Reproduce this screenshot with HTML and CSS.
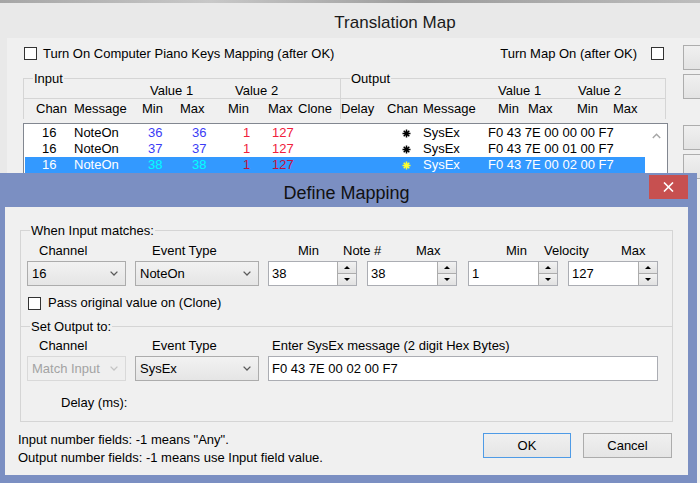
FILE: index.html
```html
<!DOCTYPE html>
<html>
<head>
<meta charset="utf-8">
<title>Translation Map</title>
<link rel="stylesheet" href="styles.css">
</head>
<body>
<div class="desk"></div>
<div class="win">
  <div class="win-title">Translation Map</div>
  <div class="win-client">
    <div class="main">
      <div class="toprow">
        <label class="chk"><span class="box"></span><span class="chk-text">Turn On Computer Piano Keys Mapping (after OK)</span></label>
        <label class="chk chk-r"><span class="chk-text">Turn Map On (after OK)</span><span class="box"></span></label>
      </div>
      <div class="groups">
        <div class="grp grp-in">
          <span class="legend">Input</span>
          <div class="vrow vrow-in"><span>Value 1</span><span>Value 2</span></div>
          <div class="crow crow-in"><span>Chan</span><span>Message</span><span>Min</span><span>Max</span><span>Min</span><span>Max</span><span>Clone</span></div>
        </div>
        <div class="grp grp-out">
          <span class="legend">Output</span>
          <div class="vrow vrow-out"><span>Value 1</span><span>Value 2</span></div>
          <div class="crow crow-out"><span>Delay</span><span>Chan</span><span>Message</span><span>Min</span><span>Max</span><span>Min</span><span>Max</span></div>
        </div>
      </div>
      <div class="list">
        <div class="rows">
          <div class="row"><span>16</span><span>NoteOn</span><span class="v1">36</span><span class="v1">36</span><span class="v2">1</span><span class="v2">127</span><span class="star"><svg width="9" height="9" viewBox="0 0 9 9"><path d="M4.5 0.5V8.5M0.5 4.5H8.5M1.7 1.7L7.3 7.3M7.3 1.7L1.7 7.3" stroke="currentColor" stroke-width="1.5"/></svg></span><span>SysEx</span><span>F0 43 7E 00 00 00 F7</span></div>
          <div class="row"><span>16</span><span>NoteOn</span><span class="v1">37</span><span class="v1">37</span><span class="v2">1</span><span class="v2">127</span><span class="star"><svg width="9" height="9" viewBox="0 0 9 9"><path d="M4.5 0.5V8.5M0.5 4.5H8.5M1.7 1.7L7.3 7.3M7.3 1.7L1.7 7.3" stroke="currentColor" stroke-width="1.5"/></svg></span><span>SysEx</span><span>F0 43 7E 00 01 00 F7</span></div>
          <div class="row row-sel"><span>16</span><span>NoteOn</span><span class="v1">38</span><span class="v1">38</span><span class="v2">1</span><span class="v2">127</span><span class="star"><svg width="9" height="9" viewBox="0 0 9 9"><path d="M4.5 0.5V8.5M0.5 4.5H8.5M1.7 1.7L7.3 7.3M7.3 1.7L1.7 7.3" stroke="currentColor" stroke-width="1.5"/></svg></span><span>SysEx</span><span>F0 43 7E 00 02 00 F7</span></div>
        </div>
        <div class="vscroll"><svg width="9" height="6" viewBox="0 0 9 6"><path d="M0.8 5L4.5 1.3L8.2 5" fill="none" stroke="#a6a6a6" stroke-width="1.4"/></svg></div>
      </div>
    </div>
    <div class="side">
      <div class="sbtn"></div>
      <div class="sbtn"></div>
      <div class="sbtn sbtn-gap"></div>
      <div class="sbtn"></div>
    </div>
  </div>
</div>

<div class="dlg">
  <div class="dlg-title">Define Mapping
    <div class="dlg-close"><svg width="11" height="10" viewBox="0 0 11 10"><path d="M1 0.5L10 9.5M10 0.5L1 9.5" stroke="#fff" stroke-width="1.6"/></svg></div>
  </div>
  <div class="dlg-client">
    <div class="dgrp">
      <div class="sec sec-1">
        <span class="legend">When Input matches:</span>
        <div class="lbls">
          <span class="lb-ch">Channel</span>
          <span class="lb-ev">Event Type</span>
          <div class="trio trio-note"><span>Min</span><span>Note #</span><span>Max</span></div>
          <div class="trio trio-vel"><span>Min</span><span>Velocity</span><span>Max</span></div>
        </div>
        <div class="ctls">
          <div class="combo combo-ch"><span>16</span><svg width="8" height="5" viewBox="0 0 8 5"><path d="M0.6 0.6L4 4L7.4 0.6" fill="none" stroke="#5a5a5a" stroke-width="1.3"/></svg></div>
          <div class="combo combo-ev"><span>NoteOn</span><svg width="8" height="5" viewBox="0 0 8 5"><path d="M0.6 0.6L4 4L7.4 0.6" fill="none" stroke="#5a5a5a" stroke-width="1.3"/></svg></div>
          <div class="spin spin-a"><span class="spin-val">38</span><div class="spin-btns"><div class="sb"><span class="tri-up"></span></div><div class="sb"><span class="tri-dn"></span></div></div></div>
          <div class="spin spin-b"><span class="spin-val">38</span><div class="spin-btns"><div class="sb"><span class="tri-up"></span></div><div class="sb"><span class="tri-dn"></span></div></div></div>
          <div class="spin spin-c"><span class="spin-val">1</span><div class="spin-btns"><div class="sb"><span class="tri-up"></span></div><div class="sb"><span class="tri-dn"></span></div></div></div>
          <div class="spin spin-b"><span class="spin-val">127</span><div class="spin-btns"><div class="sb"><span class="tri-up"></span></div><div class="sb"><span class="tri-dn"></span></div></div></div>
        </div>
        <label class="chk chk-clone"><span class="box"></span><span class="chk-text">Pass original value on (Clone)</span></label>
      </div>
      <div class="sec sec-2">
        <span class="legend">Set Output to:</span>
        <div class="lbls">
          <span class="lb-ch">Channel</span>
          <span class="lb-ev">Event Type</span>
          <span class="lb-sx">Enter SysEx message (2 digit Hex Bytes)</span>
        </div>
        <div class="ctls">
          <div class="combo combo-ch combo-dis"><span>Match Input</span><svg width="8" height="5" viewBox="0 0 8 5"><path d="M0.6 0.6L4 4L7.4 0.6" fill="none" stroke="#c4c4c4" stroke-width="1.3"/></svg></div>
          <div class="combo combo-ev"><span>SysEx</span><svg width="8" height="5" viewBox="0 0 8 5"><path d="M0.6 0.6L4 4L7.4 0.6" fill="none" stroke="#5a5a5a" stroke-width="1.3"/></svg></div>
          <div class="textin">F0 43 7E 00 02 00 F7</div>
        </div>
        <div class="delay">Delay (ms):</div>
      </div>
    </div>
    <div class="footer">
      <div class="notes">
        <div>Input number fields: -1 means "Any".</div>
        <div>Output number fields: -1 means use Input field value.</div>
      </div>
      <div class="btns">
        <div class="btn btn-ok">OK</div>
        <div class="btn">Cancel</div>
      </div>
    </div>
  </div>
</div>
</body>
</html>
```

FILE: styles.css
```css
* { box-sizing: border-box; }
html, body { margin: 0; padding: 0; }
body {
  width: 700px;
  height: 483px;
  overflow: hidden;
  position: relative;
  background: #e9e9e9;
  font-family: "Liberation Sans", Arial, sans-serif;
  font-size: 13px;
  color: #000;
}

/* desktop strip behind the window */
.desk { height: 3px; background: linear-gradient(90deg, #a6a6a6, #c8c8c8 30%, #9c9c9c 60%, #bdbdbd); }

/* ---------- background window (continues past the right edge) ---------- */
.win { width: 700px; overflow: hidden; background: #e9e9e9; }
.win-title {
  height: 35px;
  padding-top: 2px;
  padding-left: 90px;
  line-height: 35px;
  text-align: center;
  font-size: 17px;
  color: #1a1a1a;
}
.win-client {
  margin-left: 7px;
  background: #f0f0f0;
  height: 445px;
  display: flex;
}
.main { width: 661px; flex: none; padding-left: 16px; }

.toprow {
  height: 24px;
  padding-top: 7px;
  padding-right: 4px;
  display: flex;
  justify-content: space-between;
  align-items: center;
  line-height: 16px;
}
.chk { display: flex; align-items: center; }
.box {
  width: 13px;
  height: 13px;
  border: 1px solid #333;
  background: #fff;
  display: inline-block;
  flex: none;
}
.toprow .chk > .box:first-child { margin-left: 1px; margin-right: 6px; }
.chk-r .box { margin-left: 14px; }

.groups { display: flex; width: 643px; margin-top: 16px; }
.grp {
  position: relative;
  border-top: 1px solid #d5d5d5;
  border-left: 1px solid #d5d5d5;
}
.grp-in { width: 317px; }
.grp-out { flex: 1; border-right: 1px solid #d5d5d5; }
.legend {
  position: absolute;
  top: -8px;
  left: 9px;
  line-height: 15px;
  padding: 0 1px;
  background: #f0f0f0;
}
.vrow {
  height: 20px;
  padding-top: 5px;
  line-height: 14px;
  border-bottom: 1px solid #d5d5d5;
  display: grid;
}
.vrow-in { padding-left: 126px; grid-template-columns: 85px auto; }
.vrow-out { padding-left: 157px; grid-template-columns: 80px auto; }
.crow { height: 20px; line-height: 20px; display: grid; white-space: nowrap; }
.crow-in { padding-left: 12px; grid-template-columns: 38px 68px 38px 48px 40px 30px auto; }
.crow-out { grid-template-columns: 46px 36px 75px 30px 49px 36px auto; }

.list {
  margin-top: 4px;
  width: 645px;
  height: 62px;
  border: 1px solid #828790;
  background: #fff;
  display: flex;
}
.rows { flex: 1; padding: 1px 0 0 1px; }
.row {
  height: 16px;
  line-height: 16px;
  padding-left: 17px;
  display: grid;
  grid-template-columns: 32px 74px 44px 51px 29px 130px 21px 65px auto;
  white-space: nowrap;
}
.row .v1 { color: #3c3cf5; }
.row .v2 { color: #f0203c; }
.star { display: flex; align-items: center; color: #000; }
.row-sel { background: #3399ff; color: #fff; }
.row-sel .v1 { color: #00ffff; }
.row-sel .v2 { color: #c4123e; }
.row-sel .star { color: #ffff30; }
.vscroll { width: 22px; padding-top: 9px; display: flex; justify-content: center; align-items: flex-start; }

.side { margin-left: 15px; padding-top: 7px; flex: 1; }
.sbtn {
  width: 100%;
  height: 25px;
  border: 1px solid #adadad;
  border-right: 0;
  background: linear-gradient(#f0f0f0, #e3e3e3);
}
.sbtn + .sbtn { margin-top: 4px; }
.sbtn.sbtn-gap { margin-top: 26px; }

/* ---------- Define Mapping dialog (window over the other one) ---------- */
.dlg {
  position: absolute;
  left: 0;
  top: 173px;
  width: 697px;
  height: 310px;
  background: #7b8fc2;
  padding: 0 9px 8px 5px;
  display: flex;
  flex-direction: column;
}
.dlg-title {
  position: relative;
  height: 34px;
  padding-top: 3px;
  line-height: 34px;
  text-align: center;
  font-size: 18px;
  color: #111;
}
.dlg-close {
  position: absolute;
  top: 2px;
  right: 0;
  width: 39px;
  height: 24px;
  background: #c75050;
  display: flex;
  align-items: center;
  justify-content: center;
}
.dlg-client { flex: 1; background: #f0f0f0; }

.dgrp {
  margin: 23px 15px 0;
  border: 1px solid #d5d5d5;
}
.sec { position: relative; padding-left: 6px; }
.sec-1 { padding-top: 13px; padding-bottom: 16px; }
.sec-2 { border-top: 1px solid #d5d5d5; padding-top: 12px; padding-bottom: 11px; }

.lbls { display: flex; height: 14px; line-height: 14px; white-space: nowrap; }
.lb-ch { width: 99px; padding-left: 12px; }
.lb-ev { width: 124px; margin-left: 9px; padding-left: 17px; }
.lb-sx { margin-left: 9px; padding-left: 4px; }
.trio { display: grid; }
.trio-note { width: 189px; margin-left: 9px; padding-left: 30px; grid-template-columns: 45px 73px auto; }
.trio-vel { width: 190px; margin-left: 11px; padding-left: 38px; grid-template-columns: 38px 77px auto; }

.ctls { display: flex; margin-top: 3px; height: 25px; }
.combo {
  height: 25px;
  border: 1px solid #acacac;
  background: linear-gradient(#f2f2f2, #e5e5e5);
  display: flex;
  align-items: center;
  justify-content: space-between;
  padding: 0 7px 0 4px;
}
.combo-ch { width: 99px; }
.combo-ev { width: 124px; margin-left: 9px; }
.combo-dis { border-color: #d9d9d9; background: #efefef; color: #a3a3a3; }

.spin {
  height: 25px;
  border: 1px solid #abadb3;
  background: #fff;
  display: flex;
}
.spin-a { width: 89px; margin-left: 9px; }
.spin-b { width: 90px; margin-left: 10px; }
.spin-c { width: 90px; margin-left: 11px; }
.spin-val { flex: 1; padding-left: 3px; line-height: 23px; }
.spin-btns {
  width: 19px;
  display: flex;
  flex-direction: column;
  border-left: 1px solid #acacac;
}
.sb {
  flex: 1;
  background: linear-gradient(#f2f2f2, #e2e2e2);
  display: flex;
  align-items: center;
  justify-content: center;
}
.sb + .sb { border-top: 1px solid #acacac; }
.tri-up, .tri-dn { width: 0; height: 0; border-left: 3px solid transparent; border-right: 3px solid transparent; }
.tri-up { border-bottom: 3px solid #000; }
.tri-dn { border-top: 3px solid #000; }

.textin {
  width: 390px;
  margin-left: 9px;
  height: 25px;
  border: 1px solid #abadb3;
  background: #fff;
  padding-left: 3px;
  line-height: 23px;
}

.chk-clone { margin-top: 10px; height: 14px; line-height: 14px; }
.chk-clone .box { margin-left: 1px; margin-right: 7px; }

.delay { margin-top: 15px; padding-left: 34px; line-height: 14px; }

.footer {
  display: flex;
  justify-content: space-between;
  padding: 0 16px 0 13px;
  margin-top: 9px;
}
.notes { line-height: 18px; }
.btns { display: flex; margin-top: 2px; }
.btn {
  width: 89px;
  height: 25px;
  border: 1px solid #acacac;
  background: linear-gradient(#f0f0f0, #e5e5e5);
  text-align: center;
  line-height: 23px;
}
.btn + .btn { margin-left: 12px; }
.btn-ok { width: 88px; border-color: #4f9be6; }
```
